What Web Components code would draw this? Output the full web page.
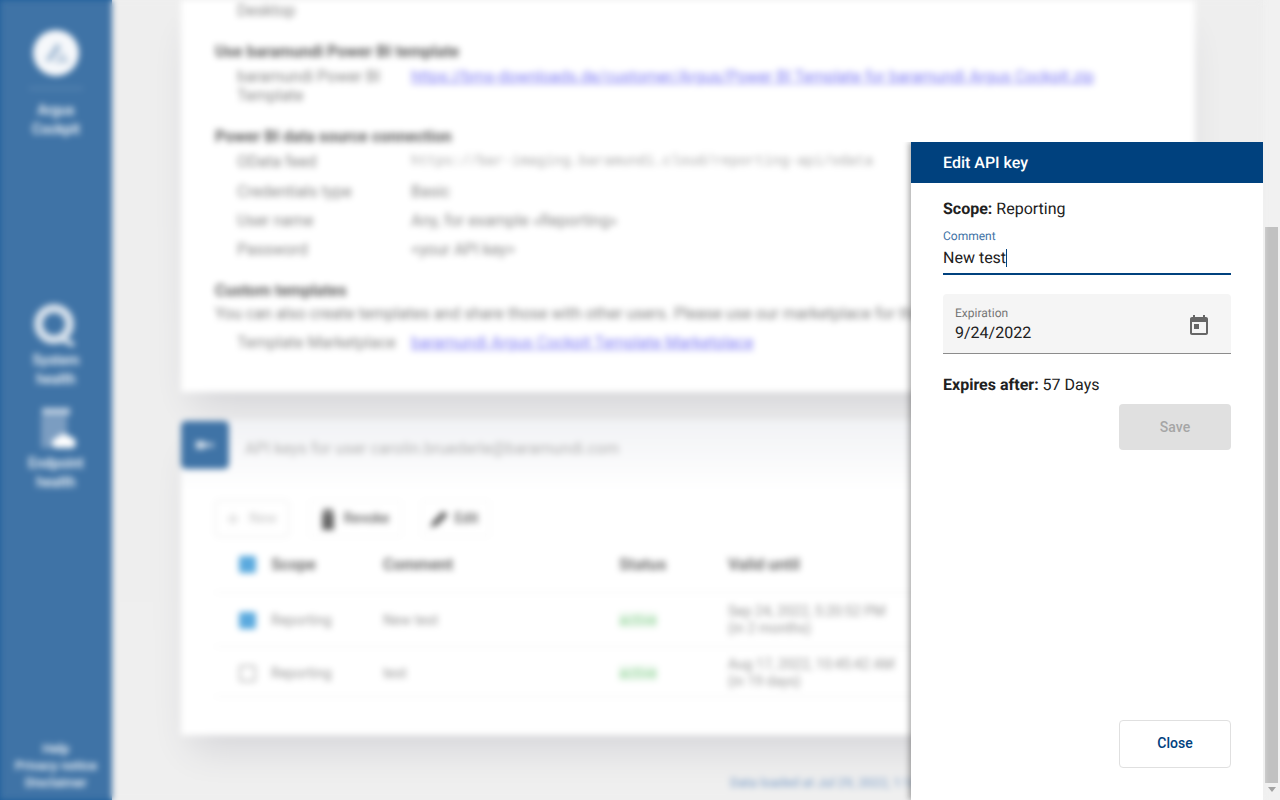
<!DOCTYPE html>
<html lang="en">
<head>
<meta charset="utf-8">
<title>Edit API key</title>
<style>
	html, body {
		margin: 0;
		height: 100%;
		overflow: hidden;
	}
	body {
		font-family: Roboto, "Liberation Sans", sans-serif;
		background: linear-gradient(90deg, #1d5d9b 112px, #eeeeee 112px);
	}
</style>
</head>
<body>
<app-shell>
	<app-backdrop>
		<app-sidebar slot="side"></app-sidebar>
		<info-card>
			<info-row label="" first>Desktop</info-row>
			<section-title>Use baramundi Power BI template</section-title>
			<info-row label="baramundi Power BI Template" link>https://bms-downloads.de/customer/Argus/Power BI Template for baramundi Argus Cockpit.zip</info-row>
			<section-title>Power BI data source connection</section-title>
			<info-row label="OData feed" mono gap="11">https://bar-imaging.baramundi.cloud/reporting-api/odata</info-row>
			<info-row label="Credentials type">Basic</info-row>
			<info-row label="User name">Any, for example «Reporting»</info-row>
			<info-row label="Password">&lt;your API key&gt;</info-row>
			<section-title>Custom templates</section-title>
			<info-text>You can also create templates and share those with other users. Please use our marketplace for this.</info-text>
			<info-row label="Template Marketplace" link>baramundi Argus Cockpit Template Marketplace</info-row>
		</info-card>
		<keys-card></keys-card>
		<data-stamp>Data loaded at Jul 29, 2022, 1:14 PM</data-stamp>
	</app-backdrop>
	<fake-scrollbar></fake-scrollbar>
</app-shell>
<edit-panel></edit-panel>

<script>
class AppShell extends HTMLElement {
	constructor() {
		super();
		this.attachShadow({ mode: "open" });
		this.shadowRoot.innerHTML = `
		<style>
			:host { display: flex; height: 800px; overflow: hidden; }
		</style>
		<slot></slot>`;
	}
}

class AppBackdrop extends HTMLElement {
	constructor() {
		super();
		this.attachShadow({ mode: "open" });
		this.shadowRoot.innerHTML = `
		<style>
			:host {
				display: flex;
				flex: 1;
				min-width: 0;
				height: 800px;
				overflow: hidden;
				filter: blur(3px);
				background: #eeeeee;
				color: #8c8c8c;
				font-size: 16px;
				line-height: 19px;
			}
			main {
				flex: 1;
				min-width: 0;
				display: flex;
				flex-direction: column;
				padding-left: 69px;
				background: linear-gradient(#eeeeee, #efefef);
			}
		</style>
		<slot name="side"></slot>
		<main><slot></slot></main>`;
	}
}

class AppSidebar extends HTMLElement {
	constructor() {
		super();
		this.attachShadow({ mode: "open" });
		this.shadowRoot.innerHTML = `
		<style>
			:host {
				display: flex;
				flex-direction: column;
				flex: none;
				width: 112px;
				height: 800px;
				box-sizing: border-box;
				padding-top: 30px;
				background: #3f73a6;
				color: #ffffff;
				font-size: 14px;
				font-weight: 500;
				line-height: 19px;
				text-align: center;
				align-items: center;
			}
			svg { display: block; flex: none; }
			hr { width: 54px; height: 1px; margin: 12px 0 12px; border: 0; background: #7e9fc2; }
			.system { margin-top: 165px; }
			.endpoint { margin-top: 17px; }
			footer { margin-top: auto; padding-bottom: 9px; font-size: 13px; line-height: 17px; }
			footer div { white-space: nowrap; }
		</style>
		<svg width="46" height="46" viewBox="0 0 46 46">
			<circle cx="23" cy="23" r="23" fill="#f6f8fb"/>
			<path d="M12 31 24 13l4 4-10 14z" fill="#9fb8d2"/>
			<path d="M21 33l8-12 8 12z" fill="#c3d2e2"/>
		</svg>
		<hr>
		<div>Argus<br>Cockpit</div>
		<svg class="system" width="44" height="44" viewBox="0 0 44 44">
			<circle cx="20" cy="20" r="15.5" fill="none" stroke="#d5e0eb" stroke-width="9"/>
			<path d="M27 35l13 6" stroke="#d5e0eb" stroke-width="5" fill="none"/>
		</svg>
		<div style="margin-top:3px">System<br>health</div>
		<svg class="endpoint" width="44" height="46" viewBox="0 0 44 46">
			<rect x="7" y="10" width="26" height="32" fill="#7b9dc1"/>
			<rect x="8" y="2" width="28" height="7" fill="#bccde0"/>
			<path d="M23 42a5 5 0 0 1 0-10 8 8 0 0 1 13-1 6 6 0 0 1 3 11z" fill="#ffffff"/>
		</svg>
		<div style="margin-top:2px">Endpoint<br>health</div>
		<footer>
			<div>Help</div>
			<div>Privacy notice</div>
			<div>Disclaimer</div>
		</footer>`;
	}
}

class InfoCard extends HTMLElement {
	constructor() {
		super();
		this.attachShadow({ mode: "open" });
		this.shadowRoot.innerHTML = `
		<style>
			:host {
				display: block;
				width: 1014px;
				height: 392px;
				flex: none;
				box-sizing: border-box;
				padding: 1px 34px 0;
				background: #ffffff;
				box-shadow: 0 24px 36px -12px rgba(60, 64, 90, .16);
			}
		</style>
		<slot></slot>`;
	}
}

class SectionTitle extends HTMLElement {
	constructor() {
		super();
		this.attachShadow({ mode: "open" });
		this.shadowRoot.innerHTML = `
		<style>
			:host { display: block; margin: 22px 0 6px; font-weight: 700; color: #5e5e5e; }
		</style>
		<slot></slot>`;
	}
}

class InfoText extends HTMLElement {
	constructor() {
		super();
		this.attachShadow({ mode: "open" });
		this.shadowRoot.innerHTML = `
		<style>
			:host { display: block; margin: -2px 0 10px; white-space: nowrap; color: #808080; }
		</style>
		<slot></slot>`;
	}
}

class InfoRow extends HTMLElement {
	connectedCallback() {
		const label = this.getAttribute("label") || "Desktop";
		const first = this.hasAttribute("first");
		const gap = this.getAttribute("gap") || 10;
		this.attachShadow({ mode: "open" });
		this.shadowRoot.innerHTML = `
		<style>
			:host {
				display: grid;
				grid-template-columns: 174px 1fr;
				margin: 0 0 ${gap}px 22px;
				color: #888888;
				white-space: nowrap;
			}
			.label { white-space: normal; padding-right: 8px; }
			:host([first]) { margin-bottom: 0; }
			:host([link]) .value { color: #7f7cf5; text-decoration: underline; }
			:host([mono]) .value { font-family: "Liberation Mono", monospace; font-size: 14px; color: #a8a8a8; }
		</style>
		<div class="label">${label}</div>
		${first ? "" : `<div class="value"><slot></slot></div>`}`;
	}
}

class KeysCard extends HTMLElement {
	constructor() {
		super();
		this.attachShadow({ mode: "open" });
		this.shadowRoot.innerHTML = `
		<style>
			:host {
				display: block;
				flex: none;
				width: 1014px;
				height: 315px;
				box-sizing: border-box;
				margin-top: 28px;
				background: linear-gradient(#f1f2f5, #ffffff 70px);
				box-shadow: 0 24px 36px -12px rgba(60, 64, 90, .16);
			}
			header { display: flex; align-items: center; gap: 16px; padding-top: 1px; color: #b0b0b0; white-space: nowrap; }
			header span { padding-top: 6px; letter-spacing: .1px; }
			.badge {
				display: flex; align-items: center; justify-content: center;
				width: 48px; height: 48px; border-radius: 5px; background: #3f73a6;
			}
			.tools { display: flex; gap: 20px; margin: 31px 0 0 34px; }
			.tools tool-button + tool-button + tool-button { margin-left: -1px; }
		</style>
		<header>
			<div class="badge">
				<svg width="24" height="14" viewBox="0 0 24 14"><path d="M3 3h6a4 4 0 0 1 0 8H3z" fill="#d5e0eb"/><path d="M12 5h9v4h-9z" fill="#b5c8dc"/></svg>
			</div>
			<span>API keys for user carolin.bruederle@baramundi.com</span>
		</header>
		<div class="tools">
			<tool-button kind="add" width="74">New</tool-button>
			<tool-button kind="bin" width="93">Revoke</tool-button>
			<tool-button kind="pen" width="69">Edit</tool-button>
		</div>
		<key-table>
			<key-row head checked a="Scope" b="Comment" c="Status" d="Valid until"></key-row>
			<key-row checked a="Reporting" b="New test" c="active" d="Sep 24, 2022, 5:20:52 PM" e="(in 2 months)" h="54" pad="1"></key-row>
			<key-row a="Reporting" b="test" c="active" d="Aug 17, 2022, 10:45:42 AM" e="(in 19 days)" h="50" pad="3"></key-row>
		</key-table>`;
	}
}

class ToolButton extends HTMLElement {
	static icons = {
		add: `<path d="M11 6h2v12h-2zM6 11h12v2H6z" fill="#d4d4d4"/>`,
		bin: `<path d="M7 2h10v3H7zM6 6h12v17H6z" fill="#666666"/>`,
		pen: `<path d="M3 21l3-7L16 4l5 4-10 10z" fill="#666666"/>`,
	};

	connectedCallback() {
		const kind = this.getAttribute("kind");
		this.attachShadow({ mode: "open" });
		this.shadowRoot.innerHTML = `
		<style>
			:host {
				display: inline-flex;
				align-items: center;
				justify-content: center;
				gap: 4px;
				width: ${this.getAttribute("width")}px;
				height: 37px;
				box-sizing: border-box;
				padding-right: 6px;
				border: 1px solid ${kind === "add" ? "#e8e8e8" : "#f4f4f4"};
				border-radius: 4px;
				font-size: 14px;
				font-weight: 500;
				color: ${kind === "add" ? "#d0d0d0" : "#666666"};
			}
			svg { flex: none; }
		</style>
		<svg width="24" height="24" viewBox="0 0 24 24">${ToolButton.icons[kind]}</svg>
		<slot></slot>`;
	}
}

class KeyTable extends HTMLElement {
	constructor() {
		super();
		this.attachShadow({ mode: "open" });
		this.shadowRoot.innerHTML = `
		<style>
			:host { display: block; margin-left: 34px; width: 946px; }
		</style>
		<slot></slot>`;
	}
}

class KeyRow extends HTMLElement {
	connectedCallback() {
		const get = (name) => this.getAttribute(name) || "";
		const head = this.hasAttribute("head");
		const checked = this.hasAttribute("checked");
		this.attachShadow({ mode: "open" });
		this.shadowRoot.innerHTML = `
		<style>
			:host {
				display: grid;
				grid-template-columns: 56px 112px 236px 109px 1fr;
				align-items: center;
				height: ${head ? 56 : get("h")}px;
				box-sizing: border-box;
				padding-top: ${get("pad") || 0}px;
				border-bottom: 1px solid #f1f1f1;
				font-size: 14px;
				line-height: 17px;
				color: #979797;
			}
			:host([head]) { font-size: 16px; font-weight: 700; color: #6e6e6e; }
			.box {
				width: 17px; height: 17px; margin-left: 24px; box-sizing: border-box;
				border-radius: 2px;
				border: 2px solid ${checked ? "#5aaade" : "#bdbdbd"};
				background: ${checked ? "#5aaade" : "#ffffff"};
			}
			.status span { letter-spacing: .2px; }
			.status.on span { color: #8ed396; background: #eef8ef; }
		</style>
		<div class="box"></div>
		<div>${get("a")}</div>
		<div>${get("b")}</div>
		<div class="status ${head ? "" : "on"}"><span>${get("c")}</span></div>
		<div style="white-space:nowrap">${get("d")}${get("e") ? "<br>" + get("e") : ""}</div>`;
	}
}

class DataStamp extends HTMLElement {
	constructor() {
		super();
		this.attachShadow({ mode: "open" });
		this.shadowRoot.innerHTML = `
		<style>
			:host {
				display: block;
				margin: 40px 0 0 549px;
				font-size: 13px;
				line-height: 16px;
				white-space: nowrap;
				color: #7397c4;
			}
		</style>
		<slot></slot>`;
	}
}

class FakeScrollbar extends HTMLElement {
	constructor() {
		super();
		this.attachShadow({ mode: "open" });
		this.shadowRoot.innerHTML = `
		<style>
			:host {
				display: flex;
				flex-direction: column;
				flex: none;
				width: 17px;
				height: 800px;
				background: #f1f1f1;
				align-items: center;
			}
			.thumb { width: 13px; height: 556px; margin-top: 227px; background: #c1c1c1; }
			.arrow {
				width: 0; height: 0; margin-top: 4px;
				border-left: 4px solid transparent;
				border-right: 4px solid transparent;
				border-top: 5px solid #a3a3a3;
			}
		</style>
		<div class="thumb"></div>
		<div class="arrow"></div>`;
	}
}

class EditPanel extends HTMLElement {
	constructor() {
		super();
		this.attachShadow({ mode: "open" });
		this.shadowRoot.innerHTML = `
		<style>
			:host {
				position: absolute;
				top: 142px;
				left: 911px;
				width: 352px;
				height: 658px;
				display: flex;
				flex-direction: column;
				background: #ffffff;
				box-shadow: -2px 0 6px rgba(0, 0, 0, .35);
				clip-path: inset(0 0 0 -10px);
				color: #212121;
				font-size: 16px;
				line-height: 19px;
				text-rendering: geometricPrecision;
			}
			header {
				flex: none;
				height: 41px;
				display: flex;
				align-items: center;
				padding-left: 32px;
				background: #00417e;
				color: #ffffff;
				font-weight: 500;
			}
			.body {
				flex: 1;
				display: flex;
				flex-direction: column;
				padding: 16px 32px 32px;
			}
			b { font-weight: 700; }
			.comment { margin-top: 11px; height: 46px; box-sizing: border-box; border-bottom: 2px solid #00417e; }
			.comment label { display: block; font-size: 12px; line-height: 14px; color: #3f73a6; }
			.comment div { display: flex; align-items: center; margin-top: 5px; }
			.caret { width: 1px; height: 18px; background: #00417e; margin-left: 0; }
			.date {
				display: flex;
				align-items: center;
				justify-content: space-between;
				height: 60px;
				margin-top: 19px;
				padding: 0 20px 0 12px;
				box-sizing: border-box;
				background: #f5f5f5;
				border-bottom: 1px solid #8c8c8c;
				border-radius: 4px 4px 0 0;
			}
			.date label { display: block; font-size: 12px; line-height: 14px; color: #757575; margin-bottom: 3px; }
			.date svg { display: block; fill: #666666; margin-top: 4px; }
			.expires { margin-top: 21px; }
			button {
				display: block;
				align-self: flex-end;
				width: 112px;
				font: 500 14px Roboto, "Liberation Sans", sans-serif;
				border-radius: 4px;
				padding: 0 0 1px;
			}
			.save { height: 46px; margin-top: 10px; border: 0; background: #e0e0e0; color: #a6a6a6; }
			.close { height: 48px; margin-top: auto; padding-bottom: 2px; border: 1px solid #e0e0e0; background: #ffffff; color: #00417e; }
		</style>
		<header>Edit API key</header>
		<div class="body">
			<div><b>Scope:</b> Reporting</div>
			<div class="comment">
				<label>Comment</label>
				<div>New test<span class="caret"></span></div>
			</div>
			<div class="date">
				<div>
					<label>Expiration</label>
					9/24/2022
				</div>
				<svg width="24" height="24" viewBox="0 0 24 24"><path d="M19 3h-1V1h-2v2H8V1H6v2H5c-1.11 0-1.99.9-1.99 2L3 19c0 1.1.89 2 2 2h14c1.1 0 2-.9 2-2V5c0-1.1-.9-2-2-2zm0 16H5V8h14v11zM7 10h5v5H7z"/></svg>
			</div>
			<div class="expires"><b>Expires after:</b> 57 Days</div>
			<button class="save" disabled>Save</button>
			<button class="close">Close</button>
		</div>`;
	}
}

customElements.define("app-shell", AppShell);
customElements.define("app-backdrop", AppBackdrop);
customElements.define("app-sidebar", AppSidebar);
customElements.define("info-card", InfoCard);
customElements.define("section-title", SectionTitle);
customElements.define("info-text", InfoText);
customElements.define("info-row", InfoRow);
customElements.define("keys-card", KeysCard);
customElements.define("tool-button", ToolButton);
customElements.define("key-table", KeyTable);
customElements.define("key-row", KeyRow);
customElements.define("data-stamp", DataStamp);
customElements.define("fake-scrollbar", FakeScrollbar);
customElements.define("edit-panel", EditPanel);
</script>
</body>
</html>
